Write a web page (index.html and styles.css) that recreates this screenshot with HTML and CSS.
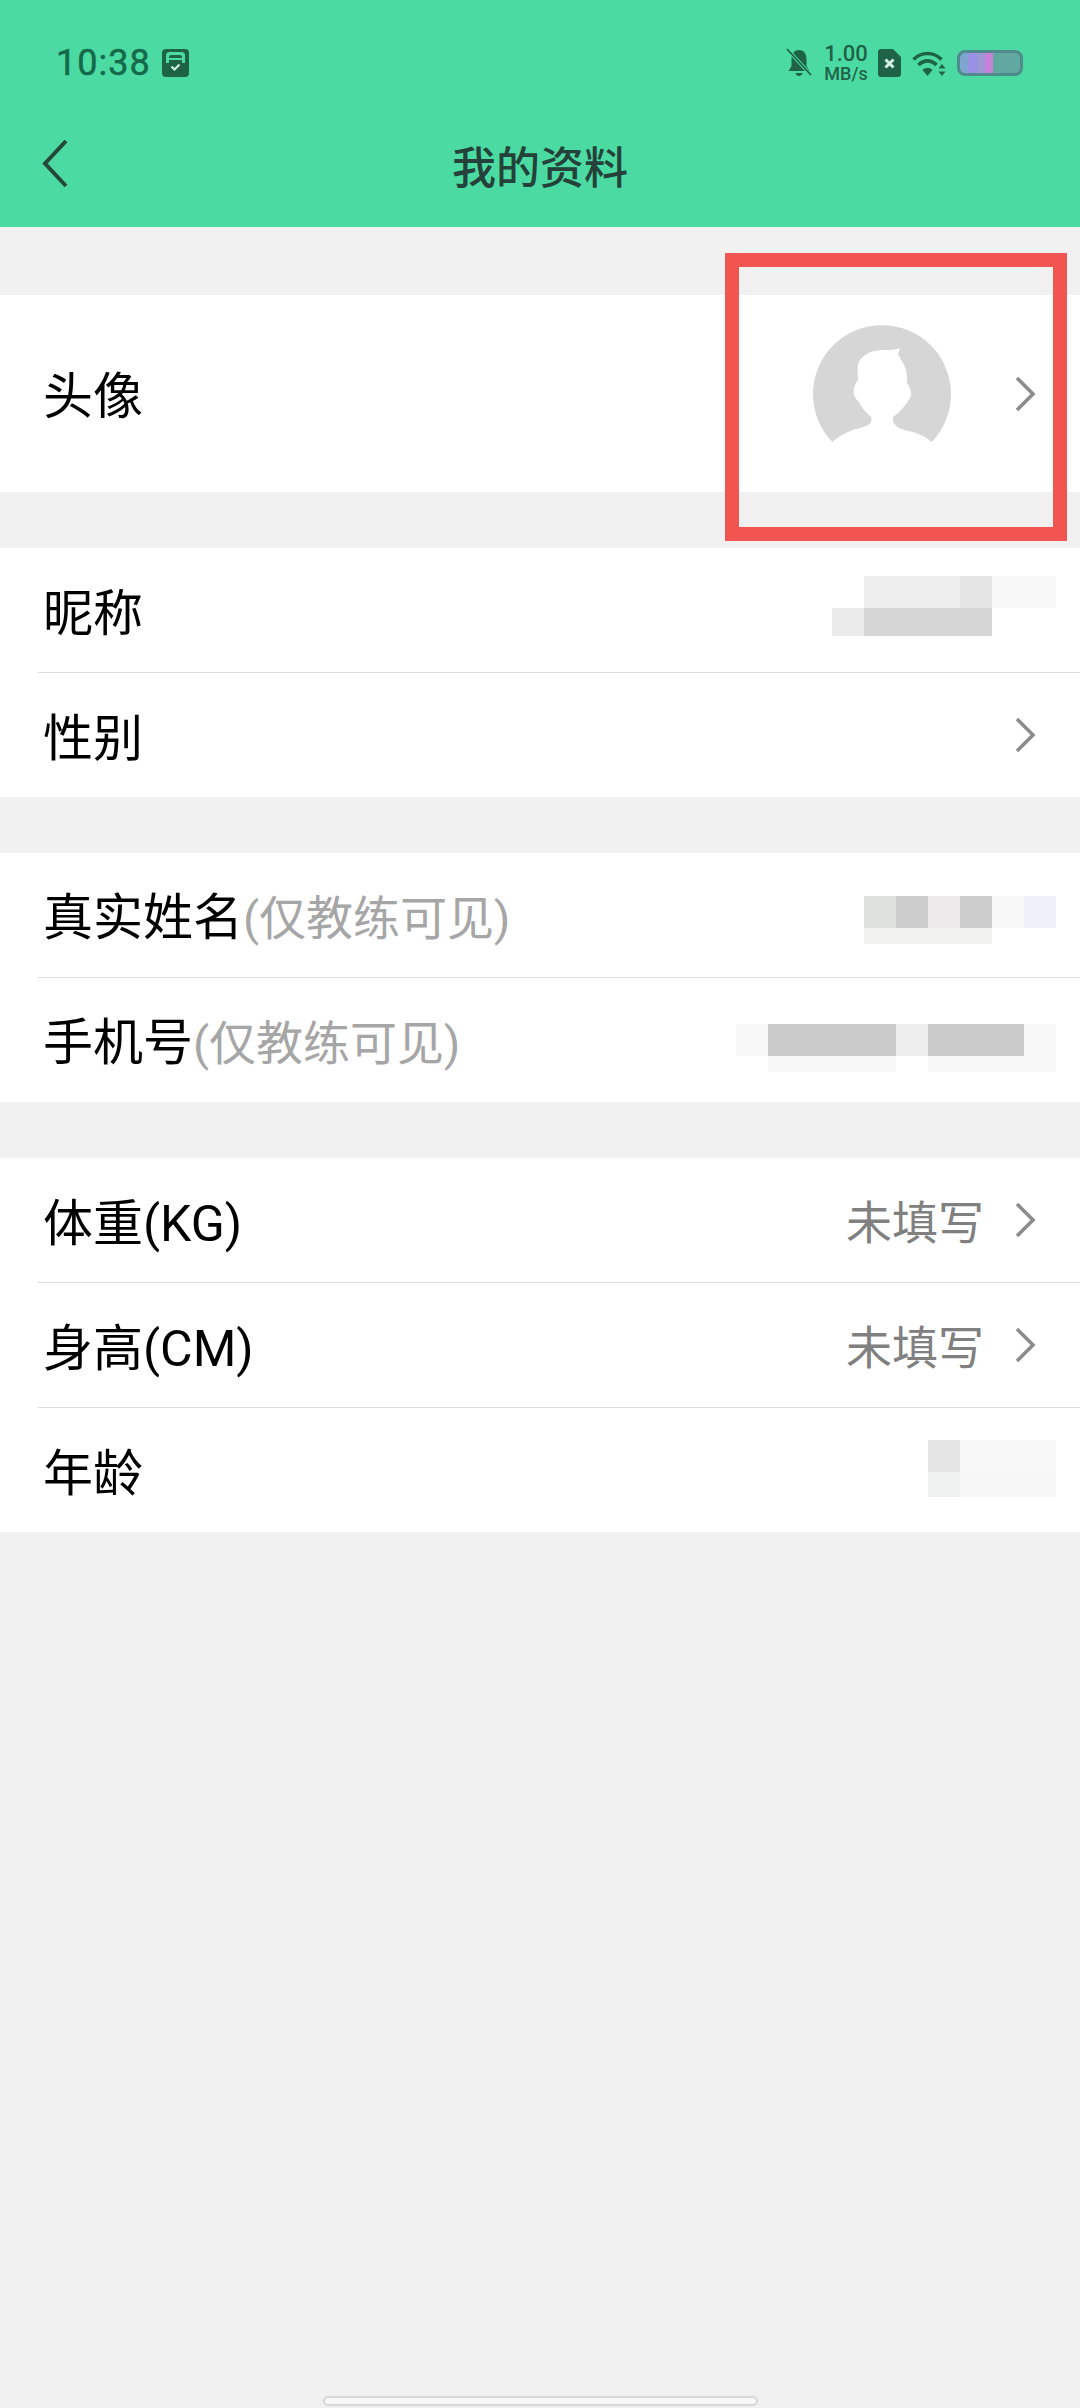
FILE: index.html
```html
<!DOCTYPE html>
<html lang="zh-CN">
<head>
  <meta charset="UTF-8" />
  <meta name="viewport" content="width=device-width, initial-scale=1.0" />
  <title>我的资料</title>
  <link rel="stylesheet" href="styles.css">
</head>
<body>
  <header class="header">
    <div class="status-bar">
      <div class="status-left">
        <span class="time">10:38</span>
        <svg class="status-app" viewBox="0 0 27 28">
          <rect width="27" height="28" rx="4" fill="#1f6347"/>
          <path d="M4 14V6.500Q4 3 7.500 3H19.500Q23 3 23 6.500V14H20V8Q20 6 18 6H9Q7 6 7 8V14Z" fill="#4bdba2"/>
          <rect x="7" y="9" width="13" height="2" fill="#4bdba2"/>
          <path d="M9.500 17.500L12.500 20.500L17.500 15.500" fill="none" stroke="#cfeee0" stroke-width="2.200"/>
        </svg>
      </div>
      <div class="status-right">
        <svg class="icon-bell" viewBox="0 0 26 30">
          <path d="M13 2C8 2 5.500 6 5.500 11V18L2.500 23H23.500L20.500 18V11C20.500 6 18 2 13 2Z" fill="#1f6347"/>
          <path d="M9.500 25H16.500C16 29 10 29 9.500 25Z" fill="#1f6347"/>
          <path d="M1 1L25 27" stroke="#4bdba2" stroke-width="3.600"/>
          <path d="M1 1L25 27" stroke="#1f6347" stroke-width="1.800"/>
        </svg>
        <div class="speed"><span class="speed-num">1.00</span><span class="speed-unit">MB/s</span></div>
        <svg class="icon-sim" viewBox="0 0 23 28">
          <path d="M3 0H15L23 8V25Q23 28 20 28H3Q0 28 0 25V3Q0 0 3 0Z" fill="#1f6347"/>
          <path d="M7.500 10.500L15.500 18.500M15.500 10.500L7.500 18.500" stroke="#d5f2e4" stroke-width="3"/>
        </svg>
        <svg class="icon-wifi" viewBox="0 0 34 27">
          <path d="M1.500 9.500C9.500 1.500 21.500 1.500 29.500 9.500" fill="none" stroke="#1f6347" stroke-width="3.600"/>
          <path d="M6.500 15C12 9.500 19 9.500 24.500 15" fill="none" stroke="#1f6347" stroke-width="3.600"/>
          <path d="M10.500 20C13.500 17 17.500 17 20.500 20L15.500 26Z" fill="#1f6347"/>
          <path d="M30 14L33.500 18.500H26.500ZM30 26L26.500 21.500H33.500Z" fill="#1f6347"/>
        </svg>
        <div class="battery"></div>
      </div>
    </div>
    <div class="nav-bar">
      <svg class="nav-back" viewBox="0 0 26 50">
        <path d="M24 2L3 24.500L24 47" fill="none" stroke="#25483a" stroke-width="4"/>
      </svg>
      <h1 class="nav-title">我的资料</h1>
    </div>
  </header>

  <main class="content">
    <section class="group group-first">
      <div class="row row-avatar">
        <span class="label">头像</span>
        <div class="row-right">
          <svg class="avatar" viewBox="0 0 138 118">
            <path d="M19.300 117A69 69 0 1 1 118.700 117C112 111 105 108 92 105C85 103 79 100 80 92C87 87 93 80 97 73C99 68 98 64 94 58C94 52 94 47 92 42C90 37 87 33 85 29L87 23C82 25 77 25 72 25C64 25 58 26 54 29C49 32 46 35 45 40C44 44 45 50 45 55C41 60 40 65 41 70C42 73 44 75 46 77C49 84 54 88 58.300 92C59 98 57 100 50 102C38 105 28 109 19.300 117Z" fill="#d6d6d6"/>
          </svg>
          <svg class="chevron" viewBox="0 0 22 36"><path d="M3 2L19 18L3 34" /></svg>
        </div>
      </div>
    </section>

    <section class="group">
      <div class="row">
        <span class="label">昵称</span>
        <div class="mosaic mosaic-nick" aria-hidden="true">
          <div class="mosaic-row">
            <i class="cell"></i><i class="cell w3 s-ee"></i><i class="cell s-e5"></i><i class="cell w2 s-f8"></i>
          </div>
          <div class="mosaic-row mosaic-low">
            <i class="cell s-eb"></i><i class="cell w4 s-d5"></i>
          </div>
        </div>
      </div>
      <div class="row">
        <span class="label">性别</span>
        <div class="row-right">
          <svg class="chevron" viewBox="0 0 22 36"><path d="M3 2L19 18L3 34" /></svg>
        </div>
      </div>
    </section>

    <section class="group">
      <div class="row">
        <span class="label">真实姓名<span class="hint">(仅教练可见)</span></span>
        <div class="mosaic mosaic-name" aria-hidden="true">
          <div class="mosaic-row">
            <i class="cell s-de"></i><i class="cell s-cd"></i><i class="cell s-ee2"></i><i class="cell s-cd"></i><i class="cell s-f8"></i><i class="cell s-ef"></i>
          </div>
          <div class="mosaic-row mosaic-thin">
            <i class="cell w4 s-f2"></i>
          </div>
        </div>
      </div>
      <div class="row">
        <span class="label">手机号<span class="hint">(仅教练可见)</span></span>
        <div class="mosaic mosaic-phone" aria-hidden="true">
          <div class="mosaic-row">
            <i class="cell s-f8"></i><i class="cell w4 s-cb"></i><i class="cell s-ee"></i><i class="cell w3 s-cb"></i><i class="cell s-f8"></i>
          </div>
          <div class="mosaic-row mosaic-thin">
            <i class="cell"></i><i class="cell w4 s-f8"></i><i class="cell"></i><i class="cell w3 s-f8"></i><i class="cell s-f8"></i>
          </div>
        </div>
      </div>
    </section>

    <section class="group">
      <div class="row">
        <span class="label">体重(KG)</span>
        <div class="row-right">
          <span class="value">未填写</span>
          <svg class="chevron" viewBox="0 0 22 36"><path d="M3 2L19 18L3 34" /></svg>
        </div>
      </div>
      <div class="row">
        <span class="label">身高(CM)</span>
        <div class="row-right">
          <span class="value">未填写</span>
          <svg class="chevron" viewBox="0 0 22 36"><path d="M3 2L19 18L3 34" /></svg>
        </div>
      </div>
      <div class="row">
        <span class="label">年龄</span>
        <div class="mosaic mosaic-age" aria-hidden="true">
          <div class="mosaic-row">
            <i class="cell s-e4"></i><i class="cell w3 s-f8"></i>
          </div>
          <div class="mosaic-row mosaic-low2">
            <i class="cell s-f0"></i><i class="cell w3 s-f6"></i>
          </div>
        </div>
      </div>
    </section>
  </main>

  <div class="home-bar"></div>

  <div class="highlight"></div>
</body>
</html>
```

FILE: styles.css
```css
* {
  box-sizing: border-box;
}
html, body {
  margin: 0;
  padding: 0;
}
body {
  position: relative;
  width: 1080px;
  height: 2408px;
  display: flex;
  flex-direction: column;
  background: #f1f1f1;
  font-family: "Noto Sans CJK SC", "Noto Sans", sans-serif;
  color: #000;
  overflow: hidden;
}

/* header */
.header {
  height: 227px;
  background: #4bdba2;
  flex-shrink: 0;
}
.status-bar {
  height: 126px;
  padding: 0 57px 0 56px;
  display: flex;
  align-items: center;
  justify-content: space-between;
}
.status-left {
  display: flex;
  align-items: center;
  gap: 11px;
}
.time {
  font-family: Roboto, sans-serif;
  font-size: 36px;
  line-height: 40px;
  letter-spacing: 1px;
  -webkit-text-stroke: 0.5px #14694a;
  color: #14694a;
}
.status-app {
  width: 27px;
  height: 28px;
}
.status-right {
  display: flex;
  align-items: center;
}
.icon-bell {
  width: 26px;
  height: 30px;
  margin-right: 11px;
}
.speed {
  width: 46px;
  display: flex;
  flex-direction: column;
  align-items: center;
  font-family: Roboto, sans-serif;
  color: #1f6347;
  font-weight: 500;
}
.speed-num {
  font-size: 22px;
  line-height: 22px;
}
.speed-unit {
  font-size: 18px;
  line-height: 18px;
}
.icon-sim {
  width: 23px;
  height: 28px;
  margin-left: 9px;
}
.icon-wifi {
  width: 34px;
  height: 27px;
  margin-left: 11px;
}
.battery {
  width: 66px;
  height: 26px;
  margin-left: 11px;
  border: 3px solid #4f8a8c;
  border-radius: 8px;
  background: linear-gradient(90deg, #7fa6cf 0 13%, #9a90e6 13% 28%, #9f96d6 28% 42%, #c580d8 42% 55%, #60a8a0 55% 100%);
}
.nav-bar {
  position: relative;
  height: 101px;
  display: flex;
  align-items: center;
  justify-content: center;
  padding-bottom: 24px;
}
.nav-back {
  position: absolute;
  left: 42px;
  top: 13px;
  width: 26px;
  height: 50px;
}
.nav-title {
  margin: 0;
  font-size: 44px;
  line-height: 60px;
  font-weight: 500;
  color: #25423a;
}

/* list */
.group {
  margin-top: 56px;
  background: #fff;
}
.group-first {
  margin-top: 68px;
}
.row {
  height: 124px;
  margin-left: 38px;
  padding: 0 24px 0 5px;
  display: flex;
  align-items: center;
  justify-content: space-between;
}
.row + .row {
  height: 125px;
  border-top: 1px solid #dedede;
}
.row-avatar {
  height: 197px;
}
.label {
  font-family: Roboto, "Noto Sans CJK SC", sans-serif;
  font-size: 50px;
  line-height: 70px;
  padding-top: 7px;
  color: #000;
}
.hint {
  font-size: 47px;
  color: #a6a6a6;
}
.row-right {
  display: flex;
  align-items: center;
  padding-right: 20px;
}
.value {
  font-size: 46px;
  line-height: 60px;
  padding-bottom: 3px;
  color: #808080;
  margin-right: 30px;
}
.chevron {
  width: 22px;
  height: 36px;
  fill: none;
  stroke: #8c8c8c;
  stroke-width: 3.600;
}
.avatar {
  width: 138px;
  height: 118px;
  margin-right: 63px;
  margin-top: -20px;
}

/* blurred-out values */
.mosaic {
  display: flex;
  flex-direction: column;
}
.mosaic-nick {
  margin-bottom: 8px;
}
.mosaic-name {
  margin-top: 10px;
}
.mosaic-phone {
  margin-top: 16px;
}
.mosaic-age {
  margin-bottom: 3px;
}
.mosaic-row {
  display: flex;
  height: 32px;
}
.mosaic-low {
  height: 28px;
}
.mosaic-low2 {
  height: 25px;
}
.mosaic-thin {
  height: 16px;
}
.cell {
  display: block;
  width: 32px;
}
.w2 { width: 64px; }
.w3 { width: 96px; }
.w4 { width: 128px; }
.s-cb { background: #cbcbcb; }
.s-cd { background: #cdcdcd; }
.s-d5 { background: #d5d5d5; }
.s-de { background: #dde2dc; }
.s-e4 { background: #e4e4e4; }
.s-e5 { background: #e5e5e5; }
.s-eb { background: #ebebeb; }
.s-ee { background: #eeeeee; }
.s-ee2 { background: #eeeaec; }
.s-ef { background: #eef0f7; }
.s-f0 { background: #f0f2f1; }
.s-f2 { background: #f2f3f1; }
.s-f6 { background: #f6f6f6; }
.s-f8 { background: #f8f8f8; }

/* bottom */
.home-bar {
  width: 435px;
  height: 10px;
  margin: auto auto 2px;
  background: #f8f8f8;
  border: 2px solid #d8d8d8;
  border-radius: 5px;
}
.highlight {
  position: absolute;
  left: 725px;
  top: 253px;
  width: 342px;
  height: 288px;
  border: 14px solid #f2544f;
}
```
